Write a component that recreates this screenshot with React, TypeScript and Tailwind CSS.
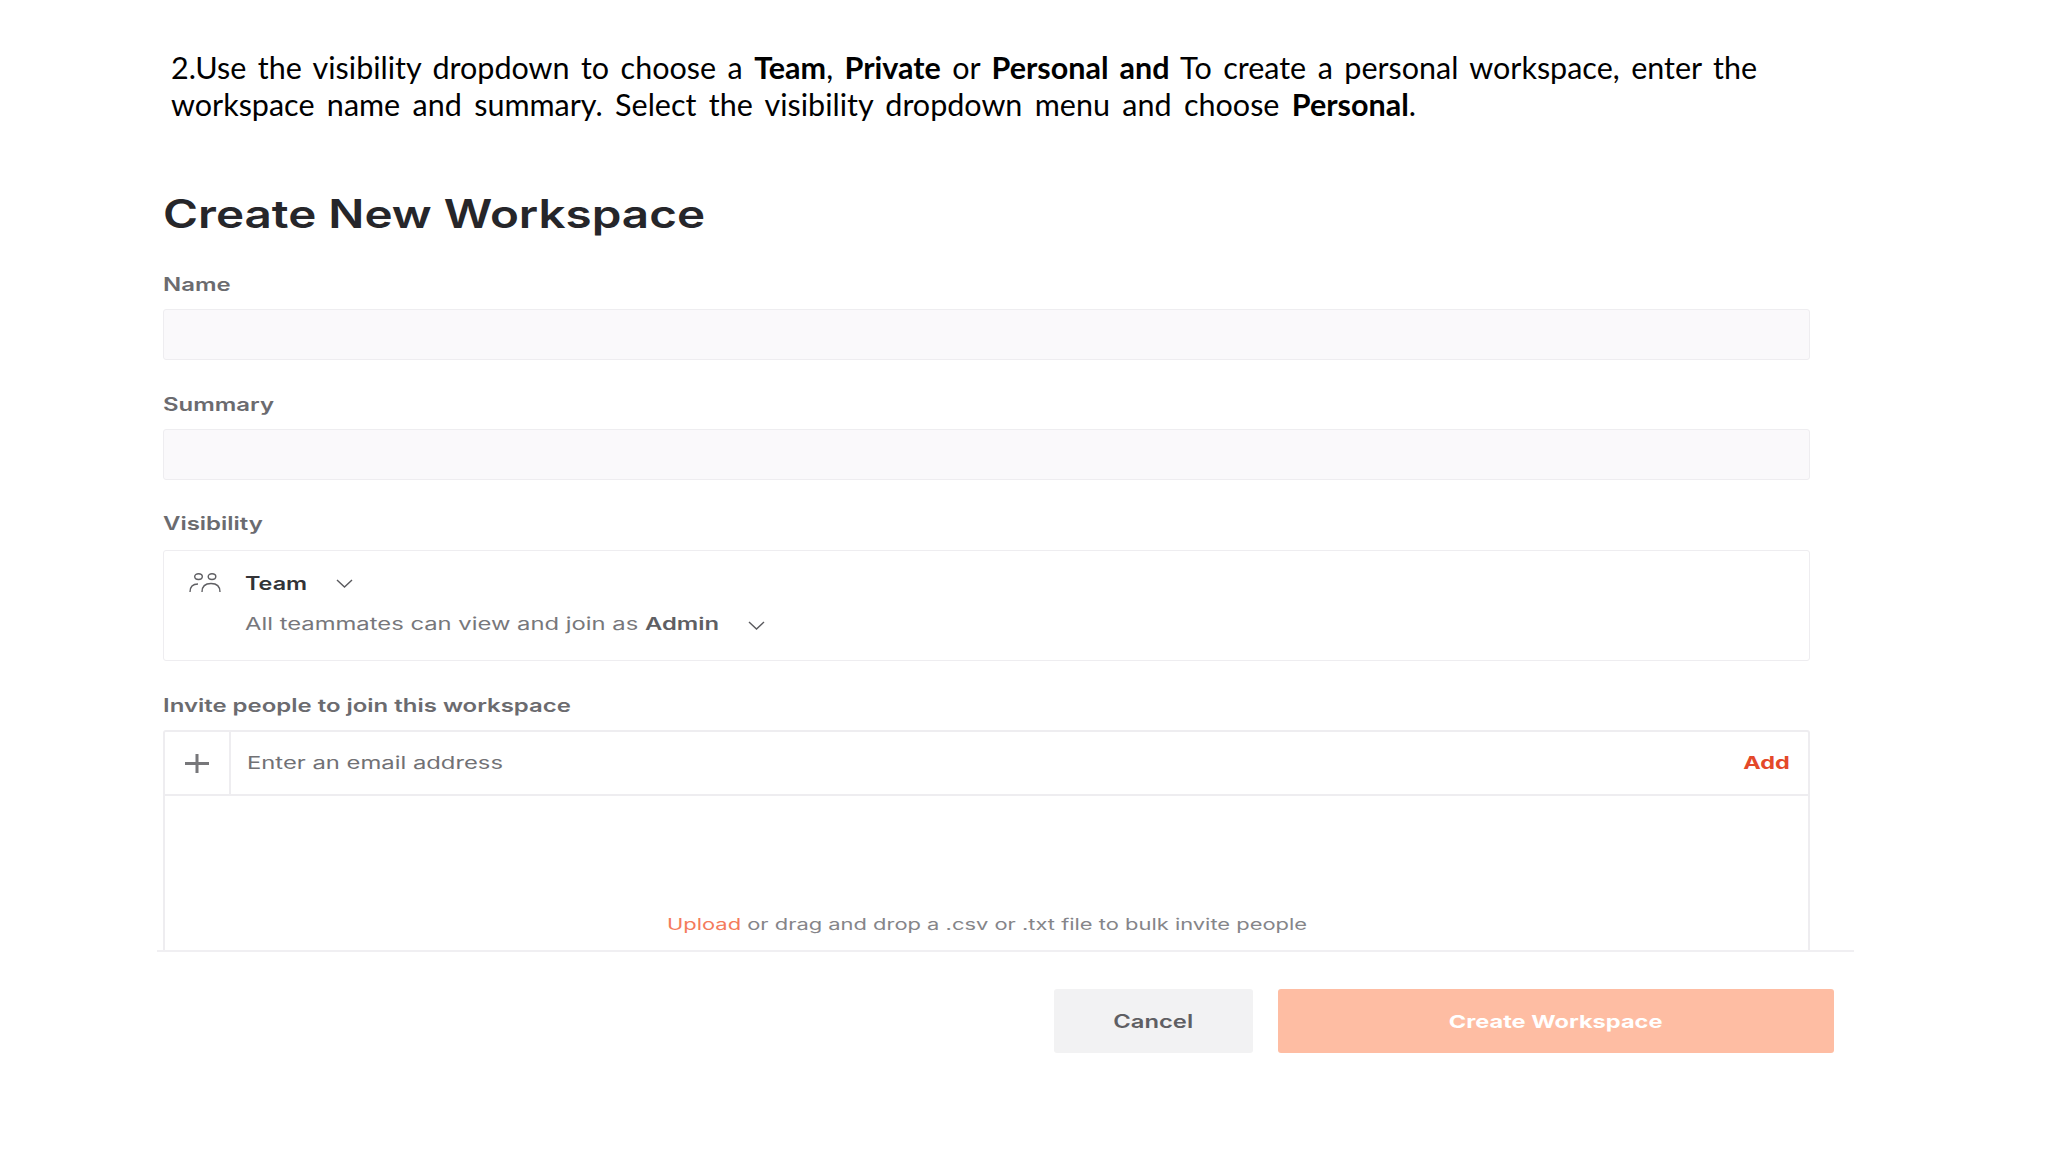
function Chevron() {
  return (
    <svg width="17" height="9" viewBox="0 0 17 9" fill="none" stroke="#5a5a5e" strokeWidth="1.4">
      <path d="M1 1 L8.5 8 L16 1" />
    </svg>
  )
}

function TeamIcon() {
  return (
    <svg width="32" height="20" viewBox="0 0 32 20" fill="none" stroke="#5f5f63" strokeWidth="1.4">
      <ellipse cx="9.5" cy="3.6" rx="3.8" ry="2.9" />
      <ellipse cx="23" cy="3.6" rx="3.8" ry="2.9" />
      <path d="M1 19 C1 14 4 11 9 11" />
      <path d="M13 19 C13 14 16 10.5 22 10.5 C28 10.5 31 14 31 19" />
    </svg>
  )
}

function Label({ children }: { children: string }) {
  return (
    <div className="h-5 origin-left scale-x-[1.33] whitespace-nowrap text-[18px] leading-5 font-semibold text-[#6b6b6f]">
      {children}
    </div>
  )
}

export default function App() {
  return (
    <div className="h-[1152px] w-[2048px] overflow-hidden bg-white pt-[49px] pl-[163px] font-['Inter',sans-serif]">
      <div className="ml-[8px] w-[1586px] font-['Lato',sans-serif] text-[30.5px] leading-[37px] text-black">
        <div className="text-justify [text-align-last:justify]">
          2.Use the visibility dropdown to choose a <b>Team</b>, <b>Private</b> or <b>Personal and</b> To create a personal workspace, enter the
        </div>
        <div className="w-[1245px] text-justify [text-align-last:justify]">
          workspace name and summary. Select the visibility dropdown menu and choose <b>Personal</b>.
        </div>
      </div>

      <h1 className="mt-[67px] h-12 origin-left scale-x-[1.22] whitespace-nowrap text-[39px] leading-[48px] font-semibold text-[#26262a]">
        Create New Workspace
      </h1>

      <div className="mt-[37px]"><Label>Name</Label></div>
      <div className="mt-[14px] h-[51px] w-[1647px] rounded-[3px] border border-[#eeedf0] bg-[#faf9fb]" />

      <div className="mt-[35px]"><Label>Summary</Label></div>
      <div className="mt-[14px] h-[51px] w-[1647px] rounded-[3px] border border-[#eeedf0] bg-[#faf9fb]" />

      <div className="mt-[34px]"><Label>Visibility</Label></div>
      <div className="mt-[16px] h-[111px] w-[1647px] rounded-[3px] border border-[#eeedf0] pl-[25px]">
        <div className="mt-[22px] flex h-5 items-center">
          <TeamIcon />
          <span className="ml-[24px] w-[91px] origin-left scale-x-[1.3] text-[18px] font-semibold text-[#333337]">Team</span>
          <Chevron />
        </div>
        <div className="mt-[22px] ml-[56px] flex h-5 items-center">
          <span className="w-[503px] origin-left scale-x-[1.4] whitespace-nowrap text-[17px] text-[#77777b]">
            All teammates can view and join as <b className="font-semibold text-[#5f5f63]">Admin</b>
          </span>
          <Chevron />
        </div>
      </div>

      <div className="mt-[35px]"><Label>Invite people to join this workspace</Label></div>
      <div className="mt-[14px] h-[220px] w-[1647px] rounded-t-[3px] border-x-2 border-t-2 border-[#eeedf0]">
        <div className="flex h-[64px] items-center border-b-2 border-[#eeedf0]">
          <div className="flex h-full w-[66px] items-center justify-center border-r-2 border-[#eeedf0]">
            <svg width="24" height="19" viewBox="0 0 24 19" fill="none" stroke="#77777a" strokeWidth="3">
              <path d="M0 9.5 H24 M12 0 V19" />
            </svg>
          </div>
          <span className="mt-[2px] ml-[16px] origin-left scale-x-[1.4] whitespace-nowrap text-[17px] text-[#717175]">Enter an email address</span>
          <span className="mt-[2px] mr-[18px] ml-auto origin-right scale-x-[1.38] text-[17px] font-bold text-[#e4492a]">Add</span>
        </div>
        <div className="mt-[119px] ml-[502px] origin-left scale-x-[1.413] whitespace-nowrap text-[15.5px] leading-5 text-[#858589]">
          <span className="text-[#f47b5c]">Upload</span> or drag and drop a .csv or .txt file to bulk invite people
        </div>
      </div>
      <div className="-ml-[6px] h-0.5 w-[1697px] bg-[#f0eff2]" />

      <div className="mt-[37px] flex w-[1671px] justify-end gap-[25px]">
        <div className="flex h-[64px] w-[199px] items-center justify-center rounded-[3px] bg-[#f2f2f3]">
          <span className="scale-x-[1.32] text-[18px] font-semibold text-[#5f5f63]">Cancel</span>
        </div>
        <div className="flex h-[64px] w-[556px] items-center justify-center rounded-[3px] bg-[#febda3]">
          <span className="scale-x-[1.31] text-[18px] font-bold text-white">Create Workspace</span>
        </div>
      </div>
    </div>
  )
}
